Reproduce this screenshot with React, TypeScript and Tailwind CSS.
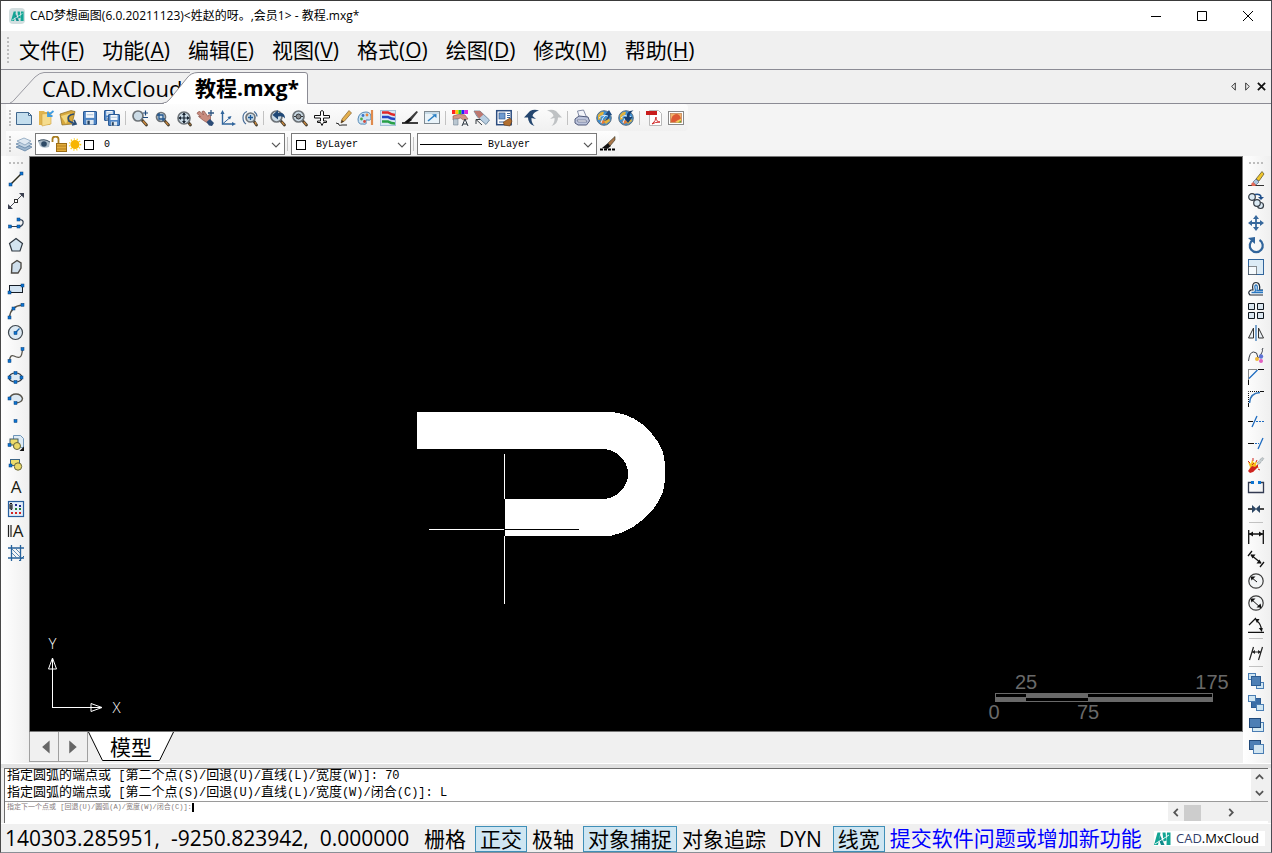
import { Fragment, type ReactNode } from "react";

const BLUE = "#0b74d1";

/* Small grip square used on drawing-tool icons. */
function Dot({ x, y }: { x: number; y: number }) {
  return <rect x={x - 1.5} y={y - 1.5} width="3" height="3" fill={BLUE} stroke="#0a3f78" strokeWidth="0.5" />;
}

function Lens({ x, y, r = 4.5 }: { x: number; y: number; r?: number }) {
  return (
    <>
      <path d={`M${x + r * 0.7} ${y + r * 0.7}L14.5 15`} stroke="#4a4030" strokeWidth="2.8" strokeLinecap="round" />
      <path d={`M${x + r * 0.8 + 1} ${y + r * 0.8 + 1}L14.3 14.8`} stroke="#d08a3c" strokeWidth="1.3" />
      <circle cx={x} cy={y} r={r} fill="#cbdbe6" stroke="#6d7378" strokeWidth="1.7" />
    </>
  );
}

function Disk({ x, y, s }: { x: number; y: number; s: number }) {
  return (
    <>
      <rect x={x} y={y} width={s} height={s} rx="0.5" fill="#4f86c6" stroke="#2a5a96" />
      <rect x={x + s * 0.18} y={y + 0.5} width={s * 0.64} height={s * 0.45} fill="#f4f8fc" />
      <path d={`M${x + s * 0.25} ${y + s * 0.25}h${s * 0.5}`} stroke="#a9c0d8" />
      <rect x={x + s * 0.22} y={y + s * 0.65} width={s * 0.56} height={s * 0.35} fill="#dfe9f2" />
      <rect x={x + s * 0.3} y={y + s * 0.7} width={s * 0.18} height={s * 0.3} fill="#24415f" />
    </>
  );
}

function Globe() {
  return (
    <>
      <circle cx="8" cy="8" r="7.3" fill="#3f8fd0" stroke="#5c6f80" />
      <path d="M2 5q3-4 6-3l-1 3-3 1 1 3-3 1zM9 9l4-1 1 3-4 3-2-2z" fill="#e2b23a" />
      <path d="M4 11l4-1 1 3-3 1z" fill="#e77b35" />
      <path d="M3 8q5-5 10-1M5 13q1-6 6-9" stroke="#dcecf8" fill="none" />
    </>
  );
}

function OverlapSquares({ a, b, c }: { a: "light" | "dark"; b: "light" | "dark" | "none"; c: "light" | "dark" }) {
  const fill = { light: "#cfe5f2", dark: "#4d7fb5", none: "none" };
  return (
    <>
      <rect x="0.5" y="0.5" width="7" height="6" fill={fill[a]} stroke="#4a7db3" />
      <rect x="8.5" y="9.5" width="7" height="6" fill={fill[c]} stroke="#4a7db3" />
      {b !== "none" && <rect x="3.5" y="3.5" width="9" height="9" fill={fill[b]} stroke="#2b5c93" />}
    </>
  );
}

const icons: Record<string, ReactNode> = {
  new: <path d="M.5 2.5h12l3 3v9H.5zM12.5 2.5v3h3" fill="#c4deee" stroke="#40678e" />,
  open: (
    <>
      <path d="M1 1h5l1 1h5v13H1z" fill="#e0b44f" />
      <path d="M4 4l9-1v11l-9 2z" fill="#f5dc8e" stroke="#d0a33e" strokeWidth="0.6" />
      <path d="M15.5 1l-5.500 4.500m0-4v4.500h4.500" stroke="#3f9be0" strokeWidth="1.8" fill="none" />
    </>
  ),
  importFile: (
    <>
      <path d="M0 4l11-3.500 4 1-3 12.500-10 1z" fill="#d7a83c" stroke="#8a6a20" strokeWidth="0.7" />
      <path d="M1 6l9-2.500L6 14z" fill="#f2d77e" />
      <path d="M14 4Q6 5 9 11l6 3m-1-4l2 4-4 1" stroke="#294c74" strokeWidth="1.700" fill="none" />
    </>
  ),
  save: <Disk x={1.5} y={1.5} s={13} />,
  saveAll: (
    <>
      <Disk x={0.5} y={0.5} s={10} />
      <Disk x={4.5} y={4.5} s={11} />
    </>
  ),
  zoomRealtime: (
    <>
      <Lens x={6} y={6} r={5} />
      <path d="M11 3h5M13.500.5v5M11 7.500h5" stroke="#1f4a7d" strokeWidth="1.2" />
    </>
  ),
  zoomWindow: (
    <>
      <Lens x={7} y={7} />
      <path d="M5 5h4v4H5zM3 5h2M5 3v2M9 9h2M9 9v2" fill="none" stroke="#20548c" strokeWidth="1.300" />
    </>
  ),
  zoomExtents: (
    <>
      <Lens x={8} y={8} r={6} />
      <path d="M8 3v10M3 8h10" stroke="#15212e" strokeWidth="1.2" />
      <path d="M8 2.500L6 5h4zM8 13.500L6 11h4zM2.500 8L5 6v4zM13.500 8L11 6v4z" fill="#15212e" />
    </>
  ),
  pan: (
    <>
      <path d="M0 2l2-.5 3.500 3.500L4 1.500l2-.5 4 5.500 1-2 1.500 1 0 5-2 3-5-3-5-4 2 0-3.500-3z" fill="#c98d80" stroke="#8d5248" strokeWidth="0.700" />
      <path d="M8.500 12l3.500-3 4 4-2 3-3-.5z" fill="#2c4c77" />
      <path d="M13 0v6M10 3h6" stroke="#2d5480" strokeWidth="1.300" />
    </>
  ),
  ucs: (
    <>
      <path d="M2.500 2v12H14" stroke="#31659c" strokeWidth="1.400" fill="none" />
      <path d="M2.500 14l7-6" stroke="#31659c" />
      <path d="M2.500 0L.5 4h4zM16 14l-4-2v4zM11.500 6l-4 1 2.500 2.500z" fill="#31659c" />
    </>
  ),
  zoomIn: (
    <>
      <Lens x={8.500} y={7.500} r={4.500} />
      <path d="M8.500 5v5M6 7.500h5" stroke="#1e5b9b" strokeWidth="1.300" />
      <path d="M5 1.500Q1 3 1 7.500T4 14M12 1.500q3 2 3 5" stroke="#4a6f99" fill="none" strokeWidth="1.200" />
    </>
  ),
  zoomPrevious: (
    <>
      <Lens x={6.500} y={6.500} r={5.500} />
      <path d="M15 8.500Q15 2 8 3V0L2.500 5l5.500 4.500V6.500q5-1 7 2z" fill="#1f4877" />
    </>
  ),
  zoomScale: (
    <>
      <Lens x={6.500} y={6.500} r={5.500} />
      <circle cx="6.500" cy="6.500" r="2.500" fill="#8a8d90" stroke="#2f3235" />
      <path d="M2 6.500h2M9 6.500h2" stroke="#333" />
    </>
  ),
  plane: (
    <path d="M6.500 1.500q1.500-2 3 0v4h6v2.500h-6v3h3v1.500h-3l-1.500 3-1.500-3h-3V11h3V8h-6V5.500h6z" fill="#fff" stroke="#111" />
  ),
  pencil: (
    <>
      <path d="M0 13l3 1q-1 2 3 1h5" stroke="#252525" fill="none" />
      <path d="M5 13l1-4 7-8.500L15.500 3l-7 8z" fill="#e4af4e" stroke="#84602c" strokeWidth="0.700" />
      <path d="M5 13l.7-3L8 11.500z" fill="#473624" />
    </>
  ),
  palette: (
    <>
      <path d="M0 9q1-7 8-7 5 0 5 5 0 4-3 3t-2 2 -3 2Q0 15 0 9z" fill="#c9e3f4" stroke="#5689b6" />
      <circle cx="5" cy="5.500" r="1.400" fill="#3c78c8" />
      <circle cx="9" cy="5" r="1.400" fill="#e7863c" />
      <circle cx="3.500" cy="9" r="1.400" fill="#4aaa4a" />
      <circle cx="6.500" cy="11.500" r="1.400" fill="#d34b3c" />
      <path d="M14 0v15" stroke="#df8a4d" strokeWidth="2.200" />
    </>
  ),
  layersColor: (
    <>
      <rect x="0.500" y="0.500" width="15" height="15" fill="#d7e7f3" stroke="#a4c0d8" />
      <path d="M2 2.500h6q3 2 7 2.500" stroke="#e02828" strokeWidth="2.700" fill="none" />
      <path d="M2 7h6q3 2 7 2" stroke="#2444c4" strokeWidth="2.700" fill="none" />
      <path d="M2 11.500h6q3 2 7 2" stroke="#28a048" strokeWidth="2.700" fill="none" />
    </>
  ),
  brush: (
    <>
      <path d="M0 13h16" stroke="#111" strokeWidth="1.600" />
      <path d="M14.500 1l1.500 1-6.500 8-2.500-1.500z" fill="#3d3d3d" />
      <path d="M7.500 8l2.500 2-4 3-4-.5z" fill="#111" />
    </>
  ),
  expand: (
    <>
      <rect x="0.500" y="1.500" width="15" height="12" fill="#e9f3f9" stroke="#7f8a92" />
      <path d="M1 3h14" stroke="#a8c3d4" />
      <path d="M4 11l6-5" stroke="#2a7fc4" strokeWidth="1.600" />
      <path d="M12.500 4v4L8 4.500z" fill="#2a7fc4" />
    </>
  ),
  matchProps: (
    <>
      <path d="M0 2h3.500" stroke="#f22" strokeWidth="4" />
      <path d="M3.500 2h3" stroke="#fc0" strokeWidth="4" />
      <path d="M6.500 2h3" stroke="#2c2" strokeWidth="4" />
      <path d="M9.500 2h3" stroke="#22f" strokeWidth="4" />
      <path d="M12.500 2H16" stroke="#d2d" strokeWidth="4" />
      <path d="M1 6q6-3 12-1l3 4-4.500 1-3-2-7.500 2z" fill="#d69485" stroke="#87544a" strokeWidth="0.600" />
      <path d="M1.500 9h4.500v6H1.500z" fill="#bac7d1" stroke="#738593" strokeWidth="0.600" />
      <path d="M10 16l3-7 3 7M11 14h4" stroke="#2c3640" fill="none" />
    </>
  ),
  eraseArrow: (
    <>
      <path d="M0 1l6 0 9.500 9-3.500 4.500-9-8z" fill="#b9cfe2" stroke="#4e6a84" strokeWidth="0.700" />
      <path d="M0 1l6 0 3.500 3.500-4.500 4z" fill="#bd7870" />
      <path d="M8 15L2 9.500M2 14V9.500h4.500" stroke="#353a40" fill="none" />
    </>
  ),
  monitorBrush: (
    <>
      <rect x="0.700" y="0.700" width="14.500" height="14" fill="#fff" stroke="#2c4d80" strokeWidth="1.500" />
      <rect x="3" y="3" width="6" height="6" fill="#6f9bd0" stroke="#31578c" strokeWidth="0.700" />
      <path d="M11 3.500h3M11 5.500h3M11 7.500h3M3 12h5" stroke="#41679c" />
      <path d="M7.500 12l6.500-4 2 3-2 5-6-1z" fill="#b26f2f" stroke="#5e3816" strokeWidth="0.600" />
    </>
  ),
  undo: <path d="M10.500 16Q4 14 4 7.500H0L6 1q4-2 9-.5Q9 2 8.500 6L12 9 7.500 8Q7 12.500 10.500 16z" fill="#24466f" />,
  redo: <path d="M5.500 16Q12 14 12 7.500h4L10 1Q6-1 1 .5 7 2 7.500 6L4 9l4.500-1Q9 12.500 5.500 16z" fill="#bfc2c4" />,
  print: (
    <>
      <path d="M3.500 1l6-1 3 7-7 1z" fill="#f2f4fa" stroke="#66708f" strokeWidth="0.800" />
      <path d="M1 9l4-3 9 1 1.500 4-3 4H4l-3-2z" fill="#bcc4dc" stroke="#505a7b" />
      <path d="M3 10h9l1 2H4z" fill="#eef0f7" stroke="#505a7b" strokeWidth="0.600" />
    </>
  ),
  globeUp: (
    <>
      <Globe />
      <path d="M8 11q4-3 4-6H9l4-5 3 5h-2q0 5-6 6z" fill="#1f4c80" />
    </>
  ),
  globeDown: (
    <>
      <Globe />
      <path d="M15.500.5Q9 0 8.500 7H5.500l4.500 6 4.500-6h-3q0-4 4-6.500z" fill="#173f70" />
    </>
  ),
  pdf: (
    <>
      <path d="M3.500.5h9l3 3v12h-12z" fill="#fff" stroke="#b9b9b9" />
      <rect x="0" y="1" width="11" height="4" fill="#c91c1c" />
      <path d="M6 14q4-3 4-7 0 5 4 5-5 0-8 2z" stroke="#d02a2a" fill="none" />
    </>
  ),
  image: (
    <>
      <rect x="0.500" y="1.500" width="15" height="13" fill="#fff" stroke="#888" />
      <rect x="2.500" y="3.500" width="11" height="9" fill="#f2b36a" stroke="#b97a4a" strokeWidth="0.700" />
      <path d="M3 12q0-7 5-8 4 0 5 5l-3 1-3 2z" fill="#dd5a33" />
      <path d="M8 12.500l5-4v4z" fill="#f3d04b" />
      <path d="M10 12.500l3-2v2z" fill="#5b9c46" />
    </>
  ),
  layers: (
    <>
      <path d="M0 11l8-3 8 3-7 4z" fill="#9db6ce" stroke="#54789c" strokeWidth="0.700" />
      <path d="M0 8l8-3 8 3-7 4z" fill="#c4d5e4" stroke="#54789c" strokeWidth="0.700" />
      <path d="M1 5l7-3 7 3-6 4z" fill="#dfe9f2" stroke="#7895b1" strokeWidth="0.700" />
    </>
  ),
  brushDash: (
    <>
      <path d="M0 13.500h16" stroke="#000" strokeWidth="2" strokeDasharray="3 1" />
      <path d="M2 12l6-5 3 3-4 3z" fill="#111" />
      <path d="M8 7l7-6.500 0 3.500-5 6z" fill="#a9764a" stroke="#332" strokeWidth="0.600" />
    </>
  ),
  line: (
    <>
      <path d="M2.500 13.500l11-11" stroke="#2b2b1d" strokeWidth="1.400" />
      <Dot x={2.500} y={13.500} />
      <Dot x={13.500} y={2.500} />
    </>
  ),
  xline: (
    <>
      <path d="M1 15L15 1" stroke="#4a4e59" />
      <path d="M0 16v-5l5 5zM16 0h-5l5 5z" fill="#3b4050" />
      <rect x="6.500" y="6.500" width="3" height="3" fill="#fff" stroke="#333" />
    </>
  ),
  polyline: (
    <>
      <path d="M2 11.500h9M11 4.500q5 0 4 4-1 3-4 3" stroke="#2f3e52" fill="none" strokeWidth="1.200" />
      <Dot x={2} y={11.500} />
      <Dot x={10.500} y={11.500} />
      <Dot x={10.500} y={4.500} />
    </>
  ),
  polygon: <path d="M8 1.500l6.500 5-2.500 7.500H4L1.500 6.500z" fill="#d3e4f0" stroke="#303942" strokeWidth="1.200" />,
  freePolygon: <path d="M4 5l5-3.500L13 4v5l-3 5H3.500z" fill="#cfdfec" stroke="#4d4a45" strokeWidth="1.400" />,
  rectangle: (
    <>
      <rect x="1.500" y="4.500" width="13" height="7" fill="#d3e4f2" stroke="#161d26" />
      <Dot x={1.500} y={11.500} />
      <Dot x={14.500} y={4.500} />
    </>
  ),
  arc: (
    <>
      <path d="M1.500 14.500Q2.500 3 14.500 2" stroke="#57534a" fill="none" strokeWidth="1.300" />
      <Dot x={1.500} y={14.500} />
      <Dot x={5.500} y={5.500} />
      <Dot x={14.500} y={1.800} />
    </>
  ),
  circle: (
    <>
      <circle cx="7.500" cy="7.500" r="7" fill="#dce9f3" stroke="#3d454c" strokeWidth="1.200" />
      <path d="M7.500 7.500l4-4" stroke="#1d66ad" strokeWidth="1.300" />
      <Dot x={7.500} y={8} />
    </>
  ),
  spline: (
    <>
      <path d="M1.500 14Q2 7 6 9t6 1q2-1 2.500-8" stroke="#57534a" fill="none" strokeWidth="1.300" />
      <Dot x={1.500} y={14} />
      <Dot x={14.500} y={2} />
    </>
  ),
  ellipse: (
    <>
      <ellipse cx="7.500" cy="8.500" rx="6.500" ry="4.500" fill="#dce9f3" stroke="#333a42" strokeWidth="1.200" />
      <Dot x={1.500} y={8.500} />
      <Dot x={13.500} y={8.500} />
      <Dot x={7.500} y={4} />
      <Dot x={7.500} y={13} />
    </>
  ),
  ellipseArc: (
    <>
      <path d="M1.500 7.500Q3 3 8 3t6.500 4.500Q14 11.500 8 12" fill="#dce9f3" stroke="#57534a" strokeWidth="1.400" />
      <Dot x={1.500} y={7.500} />
      <Dot x={7.500} y={12} />
    </>
  ),
  point: <Dot x={7.500} y={8} />,
  insertBlock: (
    <>
      <path d="M5.500.5h7l3 3v9h-10z" fill="#deebf5" stroke="#6e95b9" />
      <rect x="2" y="4" width="8" height="6" fill="#eedd6b" stroke="#3c5a68" />
      <circle cx="9" cy="11" r="3.500" fill="#ead867" stroke="#66653a" />
      <Dot x={1.500} y={10} />
      <path d="M16 11.500V16h-4.500z" fill="#111" />
    </>
  ),
  makeBlock: (
    <>
      <rect x="2.500" y="2.500" width="9" height="6" fill="#eedd6b" stroke="#3a6486" />
      <circle cx="10" cy="9.500" r="3.700" fill="#ead867" stroke="#66653a" />
      <Dot x={2.500} y={8.500} />
    </>
  ),
  text: (
    <text x="8" y="14" textAnchor="middle" className="font-['Open_Sans'] text-[17px]" fill="#1a1a12">
      A
    </text>
  ),
  textField: (
    <>
      <rect x="0.500" y="0.500" width="15" height="15" fill="#e3eef8" stroke="#285f9f" strokeWidth="1.200" />
      <path d="M2 8V3q1-2 2 0v5q-1 2-1 0V4" stroke="#111" fill="none" />
      <path d="M7 3h2v2H7zM11 4h2v2h-2z" fill="#202a8c" />
      <path d="M7 7h2v2H7zM11 7h2v2h-2z" fill="#247a3a" />
      <path d="M3 11h2v2H3zM7 11h2v2H7zM11 11h2v2h-2z" fill="#d42424" />
    </>
  ),
  multiText: (
    <>
      <path d="M.5 2v12M3 2v12" stroke="#222" strokeWidth="1.200" />
      <text x="10" y="14" textAnchor="middle" className="font-['Open_Sans'] text-[17px]" fill="#1a1a12">
        A
      </text>
    </>
  ),
  hatch: (
    <>
      <path d="M3.500 0v16M12.500 0v16M0 3h16M0 13h16" stroke="#28639c" strokeWidth="1.300" />
      <path d="M4 8l5 5M4 4l8 8M8 4l4 4" stroke="#4f7fab" strokeWidth="0.900" />
      <path d="M11 16l5-5" stroke="#28639c" />
    </>
  ),
  erase: (
    <>
      <path d="M0 14.500h16" stroke="#333" />
      <path d="M8 8l6-7.500L16 3l-5 7z" fill="#f0c62d" stroke="#4f4722" strokeWidth="0.700" />
      <path d="M5 11l3-3 3 3-3 3z" fill="#a8c5df" stroke="#335" strokeWidth="0.500" />
      <path d="M3 13l2-2 3 3-1 1H4z" fill="#e46a58" />
    </>
  ),
  copy: (
    <>
      <circle cx="4" cy="4" r="3.300" fill="#dcebf5" stroke="#363d46" strokeWidth="1.200" />
      <circle cx="12.500" cy="12.500" r="3" fill="#dcebf5" stroke="#363d46" strokeWidth="1.200" />
      <circle cx="9" cy="10" r="3.300" fill="#dcebf5" stroke="#363d46" strokeWidth="1.200" />
      <path d="M7 1.500q6-1 6 3" stroke="#1f4f8b" strokeWidth="1.600" fill="none" />
      <path d="M10 4h6l-3 3z" fill="#1f4f8b" />
    </>
  ),
  move: (
    <>
      <path d="M8 2v12M2 8h12" stroke="#37689c" strokeWidth="1.800" />
      <path d="M8 0L5 4h6zM8 16l-3-4h6zM0 8l4-3v6zM16 8l-4-3v6z" fill="#37689c" />
    </>
  ),
  rotate: (
    <>
      <path d="M5 3A6.500 6.500 0 1 0 11.500 3" stroke="#31659c" strokeWidth="2.200" fill="none" />
      <path d="M0 1l7-1v7z" fill="#31659c" />
    </>
  ),
  scale: (
    <>
      <rect x="0.500" y="0.500" width="15" height="15" fill="#dcebf5" stroke="#31659c" />
      <rect x="0.500" y="7.500" width="8" height="8" fill="#f5fafd" stroke="#222" strokeDasharray="1 1" />
    </>
  ),
  offset: (
    <>
      <path d="M15 14H2q-3-3 1-5h2Q3.500 1.500 8 1.500T11.500 9H15" stroke="#222b36" fill="none" strokeWidth="1.200" />
      <path d="M15 11.500H3.500M6.500 11.500l1-2Q6 4 8 4t1 5.500h6" stroke="#2a77c0" fill="none" strokeWidth="1.300" />
    </>
  ),
  array: (
    <path d="M.5.500h6v6h-6zM9.500.500h6v6h-6zM.5 9.500h6v6h-6zM9.500 9.500h6v6h-6z" fill="#dbe7f0" stroke="#111820" />
  ),
  mirror: (
    <>
      <path d="M5.500 3v10h-5zM10.500 3v10h5z" fill="#e9eff4" stroke="#333" />
      <path d="M8 0v16" stroke="#2a6db0" strokeWidth="1.200" />
    </>
  ),
  editSpline: (
    <>
      <path d="M.5 14q1-9 5-9t4 4 3-1 1.500-5l1-2" stroke="#3d414a" fill="none" />
      <circle cx="9" cy="12" r="2" fill="#f0b638" />
      <circle cx="13" cy="9.500" r="2.200" fill="#5d73d6" />
      <circle cx="13" cy="14" r="2" fill="#e05fc0" />
    </>
  ),
  chamfer: (
    <>
      <path d="M.5 10.500V16M10 .5h6" stroke="#111" />
      <path d="M.5 9.500V.5H9" stroke="#111" strokeDasharray="1 1" fill="none" />
      <path d="M1 9.500l8.500-8.500" stroke="#1d6bc0" strokeWidth="1.300" />
    </>
  ),
  fillet: (
    <>
      <path d="M.5 12V16M12 .5h4" stroke="#111" />
      <path d="M.5 11V.5H11" stroke="#111" strokeDasharray="1 1" fill="none" />
      <path d="M1.500 12Q2 2 12 1.500" stroke="#2f74bb" strokeWidth="1.600" fill="none" />
    </>
  ),
  trim: (
    <>
      <path d="M0 8.500h5" stroke="#111" />
      <path d="M8 8.500h8" stroke="#1d6bc0" strokeDasharray="2 1" />
      <path d="M4 14l5-11" stroke="#1d6bc0" strokeWidth="1.300" />
    </>
  ),
  extend: (
    <>
      <path d="M0 8.500h6" stroke="#111" />
      <path d="M7 8.500h4" stroke="#1d6bc0" strokeDasharray="2 1" />
      <path d="M10 14l5-11" stroke="#1d6bc0" strokeWidth="1.300" />
    </>
  ),
  explode: (
    <>
      <path d="M9 6l5-5.500 2 1-5 6z" fill="#c6ced1" stroke="#767d80" strokeWidth="0.700" strokeDasharray="1 1" />
      <path d="M0 5l3 1.500 1-4 2 3.500 3-2-1 4 3 3-4 0-2 4-1-3-3 2 1-4z" fill="#f6c21d" />
      <path d="M0 14l4-5 3 1 3-3 0 3-5 5-3 1z" fill="#cf2420" />
      <path d="M0 4l2 2M5 1v3M9 3l-1 2M10 12l2 1M4 8l2-2" stroke="#cf2420" />
    </>
  ),
  breakAt: (
    <>
      <path d="M4 3.500H.5v10h15v-10H12" stroke="#333b52" fill="none" strokeWidth="1.300" />
      <path d="M3 2h3v3H3zM10 2h3v3h-3z" fill={BLUE} />
    </>
  ),
  join: (
    <>
      <path d="M0 8h5M11 8h5" stroke="#111" strokeWidth="1.700" />
      <path d="M4 4L8.500 8 4 12zM12 4L7.500 8l4.500 4z" fill="#2c4664" />
    </>
  ),
  dimLinear: (
    <>
      <path d="M.7 1v14M15.300 1v14M1 5h14" stroke="#111" strokeWidth="1.300" />
      <path d="M1 5l4-2.500v5zM15 5l-4-2.500v5z" fill="#111" />
    </>
  ),
  dimAligned: (
    <>
      <path d="M3 4l10 8M0 5l4-5M12 16l4-5" stroke="#111" strokeWidth="1.300" />
      <path d="M2.500 3.500h5l-3 4zM13.500 12.500h-5l3-4z" fill="#111" />
    </>
  ),
  dimRadius: (
    <>
      <circle cx="8" cy="8" r="7.200" fill="#f3f5f6" stroke="#3d3d3d" strokeWidth="1.200" />
      <path d="M3.500 4.500L9 9" stroke="#111" />
      <path d="M2.500 3.500h5l-4 4z" fill="#111" />
    </>
  ),
  dimDiameter: (
    <>
      <circle cx="8" cy="8" r="7.200" fill="#f3f5f6" stroke="#3d3d3d" strokeWidth="1.200" />
      <path d="M3 4l10 9" stroke="#111" />
      <path d="M2.500 3.500h5l-4 4zM13.500 12.500h-5l4-4z" fill="#111" />
    </>
  ),
  dimAngular: (
    <>
      <path d="M0 15.300h16M1 8l7-7M9 4q4 3 4.500 9" stroke="#111" strokeWidth="1.200" fill="none" />
      <path d="M7 2h4.500L9 6zM13.800 15l-3-4h4z" fill="#111" />
    </>
  ),
  dimOblique: (
    <>
      <path d="M1.500 15l4-13M10.500 15l4-13M4 7h9" stroke="#222" strokeWidth="1.200" />
      <path d="M4 7l3-2v4zM13 7l-3-2v4z" fill="#222" />
    </>
  ),
  orderFront: <OverlapSquares a="light" b="dark" c="light" />,
  orderBack: (
    <>
      <rect x="3.500" y="3.500" width="9" height="9" fill="#3a6da6" stroke="#2b5c93" />
      <OverlapSquares a="light" b="none" c="light" />
    </>
  ),
  orderAbove: (
    <>
      <rect x="4.500" y="5.500" width="11" height="9" fill="#d7eaf2" stroke="#4a7db3" />
      <rect x="1.500" y="1.500" width="11" height="9" fill="#4d7fb5" stroke="#20497a" />
    </>
  ),
  orderUnder: (
    <>
      <rect x="1.500" y="1.500" width="11" height="9" fill="#4d7fb5" stroke="#20497a" />
      <rect x="5.500" y="5.500" width="10" height="9" fill="#d2e5f1" stroke="#4a7db3" />
    </>
  ),
};

function Icon({ name }: { name: string }) {
  return (
    <svg viewBox="0 0 16 16" className="size-4 overflow-visible" fill="none" aria-hidden="true">
      {icons[name]}
    </svg>
  );
}

function ToolButton({ name }: { name: string }) {
  return (
    <button type="button" aria-label={name} className="flex size-[22px] shrink-0 items-center justify-center hover:bg-sky-100">
      <Icon name={name} />
    </button>
  );
}

const mainTools = [
  ["new", "open", "importFile", "save", "saveAll"],
  ["zoomRealtime", "zoomWindow", "zoomExtents", "pan", "ucs", "zoomIn"],
  ["zoomPrevious", "zoomScale", "plane", "pencil", "palette", "layersColor", "brush", "expand"],
  ["matchProps", "eraseArrow", "monitorBrush"],
  ["undo", "redo"],
  ["print", "globeUp", "globeDown"],
  ["pdf", "image"],
];

const drawTools = [
  "line", "xline", "polyline", "polygon", "freePolygon", "rectangle", "arc", "circle", "spline",
  "ellipse", "ellipseArc", "point", "insertBlock", "makeBlock", "text", "textField", "multiText", "hatch",
];

const modifyTools = [
  ["erase", "copy", "move", "rotate", "scale", "offset", "array", "mirror", "editSpline", "chamfer",
    "fillet", "trim", "extend", "explode", "breakAt", "join"],
  ["dimLinear", "dimAligned", "dimRadius", "dimDiameter", "dimAngular"],
  ["dimOblique"],
  ["orderFront", "orderBack", "orderAbove", "orderUnder"],
];

const menus = [
  ["文件", "F"], ["功能", "A"], ["编辑", "E"], ["视图", "V"],
  ["格式", "O"], ["绘图", "D"], ["修改", "M"], ["帮助", "H"],
];

function GripV({ className }: { className: string }) {
  return <span className={`w-0 shrink-0 border-l-2 border-dotted border-[#bdbdbd] ${className}`} />;
}

function GripH() {
  return <span className="mt-[6px] mb-1 h-0 w-[14px] shrink-0 border-t-2 border-dotted border-[#bdbdbd]" />;
}

function SepV() {
  return <span className="mx-[2px] h-[14px] w-[2px] shrink-0 border-l border-[#c2c2c2]" />;
}

function Chevron() {
  return (
    <svg viewBox="0 0 10 6" className="pointer-events-none absolute top-[9px] right-1 h-[6px] w-[10px]" fill="none">
      <path d="M1 .8l4 4 4-4" stroke="#555" strokeWidth="1.200" />
    </svg>
  );
}

const selectClass =
  "block h-[22px] w-full appearance-none border border-[#7a7a7a] bg-white font-['Liberation_Mono','Noto_Sans_CJK_SC',monospace] text-[10px] text-black outline-none";

/* Console text: Latin runs are set one step smaller than the Chinese ones. */
function ConsoleLine({ text }: { text: string }) {
  return (
    <p className="h-[17px] whitespace-pre">
      {text.split(/([\u4e00-\u9fff]+)/).map((run, i) => (
        <span key={i} className={i % 2 ? "text-[13px]" : "text-[12px]"}>
          {run}
        </span>
      ))}
    </p>
  );
}

function Logo({ className }: { className: string }) {
  return (
    <svg viewBox="0 0 17 14" className={className} aria-hidden="true">
      <path d="M3.500.500h3L4 13H0zM8.500.500h3l1 8-3 1zM13 .500h3.500v12.500h-4z" fill="#12a594" />
      <path d="M6 3l4.500 10H7L5 8z" fill="#0d8a8a" />
      <path d="M1 12L15 3" stroke="#fff" strokeWidth="0.900" />
    </svg>
  );
}

function StatusToggle({ label, on = false }: { label: string; on?: boolean }) {
  return (
    <button
      type="button"
      aria-pressed={on}
      className={
        on
          ? "h-[26px] shrink-0 border border-[#3f8fb8] bg-[#cfe6f2] px-1 leading-6"
          : "h-[26px] shrink-0 border border-transparent px-1 leading-6"
      }
    >
      {label}
    </button>
  );
}

function Canvas() {
  return (
    <main className="relative min-h-0 flex-1 overflow-hidden bg-black">
      <svg className="absolute inset-0 h-full w-full" shapeRendering="crispEdges">
        <path
          d="M387 255H577C590 255 600 258 612 267L622 277C631 287 635 297 635 309V320C635 334 631 341 624 351C612 366 597 376 580 379H475V342H575C588 340 598 330 598 317S588 294 575 292H387z"
          fill="#fff"
        />
        <path d="M474.500 297v45M474.500 379v68M399 372.500h75" stroke="#fff" />
        <path d="M475 372.500h74" stroke="#000" />
      </svg>
      <svg viewBox="0 0 90 90" className="absolute bottom-[8px] left-[10px] size-[90px]" fill="none" stroke="#fff">
        <path d="M12.500 30v44.500H52" shapeRendering="crispEdges" />
        <path d="M12.500 25l-4 11h8zM12.500 26v10M62 74.500l-11-4v8zM51 74.500h10" />
        <text x="12.500" y="16" textAnchor="middle" className="font-['Open_Sans'] text-[15px] font-light" fill="#fff" stroke="none">Y</text>
        <text x="76.500" y="80" textAnchor="middle" className="font-['Open_Sans'] text-[15px] font-light" fill="#fff" stroke="none">X</text>
      </svg>
      <svg viewBox="0 0 250 56" className="absolute right-[8px] bottom-[6px] h-[56px] w-[250px]" fill="#696969">
        <g shapeRendering="crispEdges">
          <rect x="11.500" y="24.500" width="217" height="8" fill="none" stroke="#696969" />
          <path d="M11 28h31v5H11zM42 24h62v5H42zM104 28h125v5H104z" />
        </g>
        <g className="font-['Liberation_Sans'] text-[20px]" textAnchor="middle">
          <text x="42" y="20">25</text>
          <text x="228" y="20">175</text>
          <text x="10" y="50">0</text>
          <text x="104" y="50">75</text>
        </g>
      </svg>
    </main>
  );
}

export default function App() {
  return (
    <div className="flex h-screen min-h-[720px] flex-col overflow-hidden border border-b-[#8a8f96] border-t-[#3a3a3a] border-r-[#4a4a52] border-l-[#4a4a4a] bg-[#f0f0f0] font-['Open_Sans','Noto_Sans_CJK_SC',sans-serif] text-black">
      <header className="flex h-[30px] shrink-0 items-center bg-white pl-2">
        <span className="flex size-4 items-center justify-center rounded-sm bg-[#d3dfe0]">
          <Logo className="h-[11px] w-[13px]" />
        </span>
        <h1 className="ml-[5px] flex-1 text-[12px]">CAD梦想画图(6.0.20211123)&lt;姓赵的呀。,会员1&gt; - 教程.mxg*</h1>
        {[
          ["最小化", "M0 5.500h10"],
          ["最大化", "M.5.500h9v9h-9z"],
          ["关闭", "M0 0l10 10M10 0L0 10"],
        ].map(([label, d]) => (
          <button key={label} type="button" aria-label={label} className="flex h-full w-[46px] items-center justify-center hover:bg-gray-200">
            <svg viewBox="0 0 10 10" className="size-[10px] overflow-visible" fill="none" stroke="#000">
              <path d={d} />
            </svg>
          </button>
        ))}
      </header>

      <nav className="flex h-[39px] shrink-0 items-center border-b border-[#8b8b94] pl-[6px] text-[21px]">
        <GripV className="mr-px h-[26px]" />
        {menus.map(([label, key]) => (
          <button key={key} type="button" className="shrink-0 px-[9px] leading-8 hover:bg-sky-100">
            {label}(<span className="underline decoration-1 underline-offset-2">{key}</span>)
          </button>
        ))}
      </nav>

      <div role="tablist" className="relative flex h-[34px] shrink-0 items-end border-b border-[#8b8b94] text-[21px]">
        <button type="button" role="tab" aria-selected="false" className="relative ml-[9px] h-[31px] w-[180px] overflow-hidden pl-[32px] text-left text-[22px] leading-[32px]">
          <svg viewBox="0 0 180 31" className="absolute inset-0 h-full w-full" fill="none">
            <path d="M0 31Q3 30 5 27L25 5Q30 .5 34 .5H180" stroke="#9a9aa2" />
          </svg>
          <span className="relative">CAD.MxCloud</span>
        </button>
        <button type="button" role="tab" aria-selected="true" className="relative -mb-px -ml-[28px] h-[32px] w-[146px] pl-[33px] text-left leading-[31px] font-bold">
          <svg viewBox="0 0 146 32" className="absolute inset-0 h-full w-full">
            <path d="M0 31.500Q5 31 8 27L25 6Q29 .5 36 .5H143Q145.500 .5 145.500 3V31.500" fill="#fff" stroke="#8b8b94" />
            <path d="M2 31.500H145" stroke="#fff" />
          </svg>
          <span className="relative">教程.mxg*</span>
        </button>
        <div className="ml-auto flex items-center gap-[5px] self-center pr-[5px]">
          {[
            ["向左", "M7 1v8L3 5z"],
            ["向右", "M3 1v8l4-4z"],
          ].map(([label, d]) => (
            <button key={label} type="button" aria-label={label}>
              <svg viewBox="0 0 10 10" className="size-[9px]" fill="none" stroke="#222">
                <path d={d} />
              </svg>
            </button>
          ))}
          <button type="button" aria-label="关闭标签">
            <svg viewBox="0 0 10 10" className="size-[9px]" stroke="#111" strokeWidth="2">
              <path d="M1 1l8 8M9 1L1 9" />
            </svg>
          </button>
        </div>
      </div>

      <div className="shrink-0 bg-[#f4f4f4] pl-[5px]">
        <div className="flex h-[27px] w-fit items-center rounded-r bg-linear-to-b from-[#fdfdfd] to-[#f0f0f0] pt-px pr-px pl-[3px]">
          <GripV className="mr-[2px] h-[16px]" />
          {mainTools.map((group, i) => (
            <Fragment key={group[0]}>
              {i > 0 && <SepV />}
              {group.map((name) => (
                <ToolButton key={name} name={name} />
              ))}
            </Fragment>
          ))}
        </div>
        <div className="flex h-[25px] w-fit items-center rounded-r bg-linear-to-b from-[#fdfdfd] to-[#f0f0f0] pt-px pl-[3px]">
          <GripV className="mr-[2px] h-[16px]" />
          <ToolButton name="layers" />
          <div className="relative w-[250px]">
            <select aria-label="图层" className={`${selectClass} pl-[68px]`}>
              <option>0</option>
            </select>
            <svg viewBox="0 0 60 16" className="pointer-events-none absolute top-[3px] left-[3px] h-[16px] w-[60px]" fill="none">
              <path d="M0 5q6-3 12 1l-1 5q-6 2-9-1z" fill="#a9bac7" />
              <path d="M0 5q6-3 12 1" stroke="#3c4f60" />
              <circle cx="6" cy="8" r="2.800" fill="#2e4a66" />
              <path d="M14.500 6V3q0-2.500 3-2.500t3 2.500v5" stroke="#a87d20" strokeWidth="1.800" />
              <rect x="18.500" y="7.500" width="10" height="8" fill="#e2ac3b" stroke="#9c6d16" />
              <path d="M19 10h9M19 13h9" stroke="#b47f20" />
              <circle cx="37" cy="8.500" r="5.500" stroke="#fc0" strokeDasharray="1 2" strokeWidth="1.500" />
              <circle cx="37" cy="8.500" r="4.500" fill="#f7b500" />
              <rect x="46.500" y="4.500" width="9" height="9" stroke="#000" />
            </svg>
            <Chevron />
          </div>
          <SepV />
          <div className="relative w-[120px]">
            <select aria-label="颜色" className={`${selectClass} pl-[24px]`}>
              <option>ByLayer</option>
            </select>
            <span className="pointer-events-none absolute top-[7px] left-[5px] size-[10px] border border-black" />
            <Chevron />
          </div>
          <SepV />
          <div className="relative w-[180px]">
            <select aria-label="线型" className={`${selectClass} pl-[70px]`}>
              <option>ByLayer</option>
            </select>
            <span className="pointer-events-none absolute top-[11px] left-[3px] h-px w-[62px] bg-black" />
            <Chevron />
          </div>
          <ToolButton name="brushDash" />
        </div>
      </div>

      <div className="flex min-h-0 flex-1">
        <aside className="flex w-[28px] shrink-0 flex-col items-center bg-linear-to-r from-white to-[#efefef] pl-px">
          <GripH />
          {drawTools.map((name) => (
            <ToolButton key={name} name={name} />
          ))}
        </aside>
        <div className="flex min-w-0 flex-1 flex-col">
          <div className="flex min-h-0 flex-1 flex-col border border-[#777]">
            <Canvas />
          </div>
          <div className="flex h-[31px] shrink-0 pb-px">
            <button type="button" aria-label="上一页" className="w-[30px] border border-t-0 border-[#a0a0a0]">
              <svg viewBox="0 0 30 30" className="w-full">
                <path d="M21 8v14l-8-7z" fill="#666" />
              </svg>
            </button>
            <button type="button" aria-label="下一页" className="-ml-px w-[30px] border border-t-0 border-[#a0a0a0]">
              <svg viewBox="0 0 30 30" className="w-full">
                <path d="M11 8v14l8-7z" fill="#666" />
              </svg>
            </button>
            <button type="button" className="relative h-[30px] w-[86px] text-[21px] leading-[28px]">
              <svg viewBox="0 0 86 30" className="absolute inset-0 h-full w-full">
                <path d="M.5 0l14 28.500h57L85.500 0" fill="#fff" stroke="#000" />
              </svg>
              <span className="relative">模型</span>
            </button>
          </div>
        </div>
        <aside className="flex w-[28px] shrink-0 flex-col items-center bg-linear-to-r from-white to-[#efefef] pr-[2px]">
          <GripH />
          {modifyTools.map((group, i) => (
            <Fragment key={group[0]}>
              {i > 0 && <span className="my-[2px] h-[2px] w-[14px] shrink-0 border-t border-[#c2c2c2]" />}
              {group.map((name) => (
                <ToolButton key={name} name={name} />
              ))}
            </Fragment>
          ))}
        </aside>
      </div>

      <div className="h-[5px] shrink-0 border-t border-white bg-[#e0e0e0]" />

      <section className="mx-[3px] shrink-0 border-t border-l border-[#6d6d6d] font-['Liberation_Mono','Noto_Sans_CJK_SC',monospace]">
        <div className="flex border-b border-[#9a9a9a] bg-white">
          <div className="h-[32px] flex-1 overflow-hidden pl-[2px] leading-[13px]">
            <ConsoleLine text="指定圆弧的端点或 [第二个点(S)/回退(U)/直线(L)/宽度(W)]: 70" />
            <ConsoleLine text="指定圆弧的端点或 [第二个点(S)/回退(U)/直线(L)/宽度(W)/闭合(C)]: L" />
          </div>
          <div className="flex w-[17px] flex-col items-center justify-around bg-[#f0f0f0]">
            {[
              ["向上滚动", "M1 5l4-4 4 4"],
              ["向下滚动", "M1 1l4 4 4-4"],
            ].map(([label, d]) => (
              <button key={label} type="button" aria-label={label}>
                <svg viewBox="0 0 10 6" className="h-[6px] w-[9px]" fill="none" stroke="#555" strokeWidth="2">
                  <path d={d} />
                </svg>
              </button>
            ))}
          </div>
        </div>
        <div className="flex h-[21px] border-b-2 border-white pr-[29px]">
          <label className="flex flex-1 items-start bg-white pt-px pl-[2px] text-[7px] leading-[9px] whitespace-pre text-[#857a7a]">
            指定下一个点或 [回退(U)/圆弧(A)/宽度(W)/闭合(C)]:
            <span className="h-[9px] w-[2px] bg-black" />
            <input aria-label="命令" className="h-[10px] min-w-0 flex-1 bg-transparent outline-none" />
          </label>
          <div className="flex h-[17px] w-[71px] items-center justify-between self-end bg-[#f0f0f0] px-[5px]">
            <button type="button" aria-label="向左滚动">
              <svg viewBox="0 0 6 10" className="h-[9px] w-[6px]" fill="none" stroke="#555" strokeWidth="2">
                <path d="M5 1L1 5l4 4" />
              </svg>
            </button>
            <span className="mr-[22px] h-[16px] w-[17px] bg-[#cdcdcd]" />
            <button type="button" aria-label="向右滚动">
              <svg viewBox="0 0 6 10" className="h-[9px] w-[6px]" fill="none" stroke="#555" strokeWidth="2">
                <path d="M1 1l4 4-4 4" />
              </svg>
            </button>
          </div>
        </div>
      </section>

      <footer className="flex h-[29px] shrink-0 items-center border-t border-white pt-px pr-[6px] pl-1 text-[21px] whitespace-pre">
        <span className="w-[414px] shrink-0">140303.285951,  -9250.823942,  0.000000</span>
        <StatusToggle label="栅格" />
        <span className="w-[4px]" />
        <StatusToggle label="正交" on />
        <StatusToggle label="极轴" />
        <span className="w-[4px]" />
        <StatusToggle label="对象捕捉" on />
        <StatusToggle label="对象追踪" />
        <span className="w-[3px]" />
        <StatusToggle label="DYN" />
        <span className="w-[6px]" />
        <StatusToggle label="线宽" on />
        <a href="#feedback" className="ml-[5px] text-[#0000ff]">
          提交软件问题或增加新功能
        </a>
        <span className="ml-auto flex h-[15px] w-[111px] items-center gap-[5px] bg-white text-[13px] leading-[15px]">
          <Logo className="h-[14px] w-[17px]" />
          <span>
            <span className="text-[#33416b]">CAD</span>.MxCloud
          </span>
        </span>
      </footer>
    </div>
  );
}
